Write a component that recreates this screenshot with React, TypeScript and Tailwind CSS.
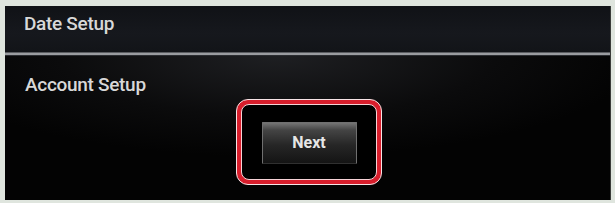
import React from "react";

export default function App() {
  return (
    <div className="w-[615px] h-[203px] bg-[#dfe5de] pl-[5px] pr-[4px] pt-[6px] pb-[3px] flex" style={{ fontFamily: "Roboto, 'Liberation Sans', sans-serif" }}>
      <div className="flex-1 flex flex-col bg-black border-r border-[#3a3d3a]">
        <div className="h-[46px] shrink-0 bg-[linear-gradient(180deg,#101216_0%,#16181d_60%,#121418_100%)] pl-[19px] pt-[7px]">
          <span className="text-[19px] leading-[22px] font-medium text-[#d8d8d8] tracking-[-0.3px]">Date Setup</span>
        </div>
        <div className="h-[1px] bg-[#5a5c60]" />
        <div className="h-[2px] bg-[#9a9ca0]" />
        <div className="h-[1px] bg-[#2a2c30]" />
        <div className="flex-1 flex flex-col bg-[radial-gradient(ellipse_60%_70%_at_45%_0%,#1e1f22_0%,#0b0b0c_60%,#030303_100%)]">
          <div className="pl-[20px] pt-[18px] h-[43px]">
            <span className="text-[19px] leading-[22px] font-medium text-[#d8d8d8] tracking-[-0.3px]">Account Setup</span>
          </div>
          <div className="pl-[231px]">
            <div className="w-[146px] h-[86px] rounded-[12px] border-[1.5px] border-[#f6e4e6] p-[4px] bg-[#d81e2c]">
              <div className="w-full h-full rounded-[8px] border-[1.5px] border-[#f6d2d6] bg-black flex items-center justify-center">
                <div className="w-[95px] h-[42px] mt-[1px] border border-[#707070] border-b-[#303030] rounded-[1px] bg-[linear-gradient(180deg,#747474_0%,#444444_18%,#262626_55%,#141414_100%)] flex items-center justify-center">
                  <span className="text-[16px] font-bold text-[#e6e6e6]">Next</span>
                </div>
              </div>
            </div>
          </div>
        </div>
      </div>
    </div>
  );
}
